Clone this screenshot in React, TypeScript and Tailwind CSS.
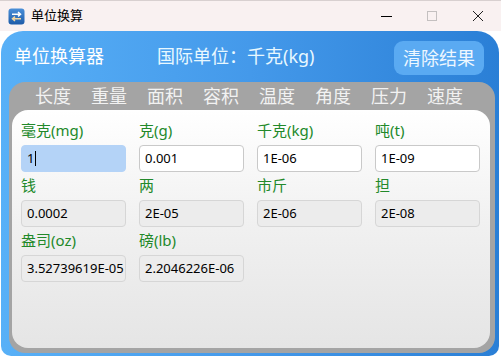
const FONT = { fontFamily: '"Noto Sans", "Noto Sans CJK SC", sans-serif' };

const tabs = ["长度", "重量", "面积", "容积", "温度", "角度", "压力", "速度"];

type Field = { label: string; value: string; kind: "active" | "edit" | "ro" };

const fields: Field[] = [
  { label: "毫克(mg)", value: "1", kind: "active" },
  { label: "克(g)", value: "0.001", kind: "edit" },
  { label: "千克(kg)", value: "1E-06", kind: "edit" },
  { label: "吨(t)", value: "1E-09", kind: "edit" },
  { label: "钱", value: "0.0002", kind: "ro" },
  { label: "两", value: "2E-05", kind: "ro" },
  { label: "市斤", value: "2E-06", kind: "ro" },
  { label: "担", value: "2E-08", kind: "ro" },
  { label: "盎司(oz)", value: "3.52739619E-05", kind: "ro" },
  { label: "磅(lb)", value: "2.2046226E-06", kind: "ro" },
];

function AppIcon() {
  return (
    <svg width="17" height="17" viewBox="0 0 17 17">
      <defs>
        <linearGradient id="ic" x1="0" y1="0" x2="0" y2="1">
          <stop offset="0" stopColor="#4a8fd8" />
          <stop offset="1" stopColor="#1d5ba8" />
        </linearGradient>
      </defs>
      <rect x="0.5" y="0.5" width="16" height="16" rx="3" fill="url(#ic)" />
      <path d="M4 6.2h8.5M10 4l2.5 2.2L10 8.4" stroke="#fff" strokeWidth="1.5" fill="none" />
      <path d="M13 10.8H4.5M7 8.6l-2.5 2.2L7 13" stroke="#f4d7a0" strokeWidth="1.5" fill="none" />
    </svg>
  );
}

function FieldCell({ f }: { f: Field }) {
  const box =
    f.kind === "active"
      ? "bg-[#b4d3f7] border-[#b4d3f7]"
      : f.kind === "edit"
        ? "bg-white border-[#c9c9c9]"
        : "bg-[#ececec] border-[#d6d6d6]";
  return (
    <div className="flex flex-col">
      <div className="h-[20px] leading-[20px] text-[15px] text-[#22892a] whitespace-nowrap">{f.label}</div>
      <div
        className={`mt-[5px] h-[27px] w-[105px] rounded-[4px] border px-[5px] flex items-center text-[13px] text-black whitespace-nowrap overflow-hidden ${box}`}
      >
        {f.value}
        {f.kind === "active" && <span className="ml-[1px] h-[15px] w-px bg-black" />}
      </div>
    </div>
  );
}

export default function App() {
  return (
    <div className="w-[501px] h-[356px] overflow-hidden bg-white" style={FONT}>
      {/* title bar */}
      <div className="h-[31px] bg-[#f9f1f1] border-t border-[#d8d0d0] flex items-center">
        <div className="ml-[8px] flex items-center">
          <AppIcon />
        </div>
        <span className="ml-[6px] text-[13px] text-black">单位换算</span>
        <div className="ml-auto flex items-center h-full">
          <div className="w-[46px] flex justify-center">
            <span className="block w-[11px] h-px bg-black" />
          </div>
          <div className="w-[46px] flex justify-center">
            <span className="block w-[10px] h-[10px] border border-[#c4c0c0]" />
          </div>
          <div className="w-[46px] flex justify-center">
            <svg width="12" height="12" viewBox="0 0 12 12">
              <path d="M1 1l10 10M11 1L1 11" stroke="#222" strokeWidth="1" />
            </svg>
          </div>
        </div>
      </div>

      {/* blue panel */}
      <div className="ml-[1px] mr-[2px] h-[325px] rounded-t-[22px] rounded-b-[10px] bg-gradient-to-r from-[#58b0f7] via-[#4499ea] to-[#2a7fd6] flex flex-col">
        <div className="h-[51px] flex items-center pl-[13px] pr-[15px]">
          <span className="text-[18px] text-white">单位换算器</span>
          <span className="ml-[53px] text-[18px] text-[#e8f8ff]">国际单位：千克(kg)</span>
          <div className="ml-auto mt-[3px] h-[34px] w-[90px] rounded-[9px] bg-[#5aaaf2] flex items-center justify-center text-[18px] text-[#eef7ff]">
            清除结果
          </div>
        </div>

        {/* gray tab frame */}
        <div className="ml-[8px] mr-[4px] h-[271px] rounded-[16px] bg-[#a4a4a4] flex flex-col">
          <div className="h-[28px] flex items-center pl-[26px]">
            {tabs.map((t) => (
              <span key={t} className="w-[56px] text-[18px] leading-[28px] text-[#f2f2f2]">
                {t}
              </span>
            ))}
          </div>
          <div className="ml-[3px] mr-[5px] h-[238px] rounded-[16px] bg-gradient-to-b from-white via-[#f0f0f0] to-[#e5e5e5] pl-[9px] pt-[10px]">
            <div className="grid grid-cols-[105px_105px_105px_105px] gap-x-[13px] gap-y-[3px]">
              {fields.map((f) => (
                <FieldCell key={f.label} f={f} />
              ))}
            </div>
          </div>
        </div>
      </div>
    </div>
  );
}
